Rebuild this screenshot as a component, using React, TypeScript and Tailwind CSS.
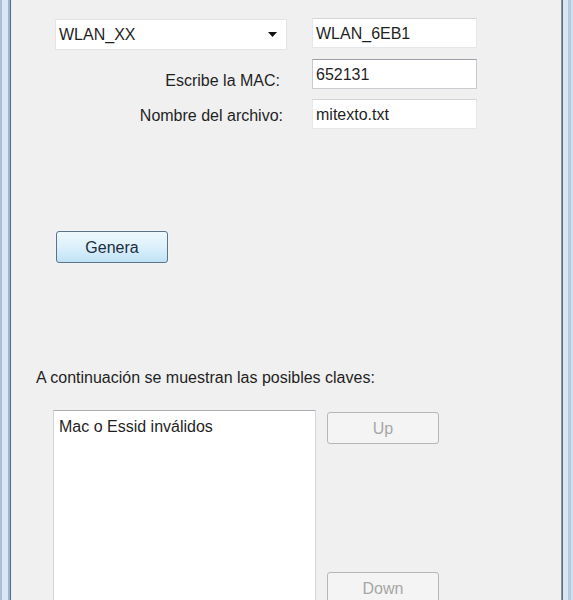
import React from 'react';

function TextBox({ value, strong }: { value: string; strong?: boolean }) {
  return (
    <div
      className={`flex h-[30px] w-[165px] items-center bg-white pl-[3px] border ${
        strong ? 'border-[#c9cbd0] border-t-[#9da1a8]' : 'border-[#e6e7ea] border-t-[#d2d4d8]'
      }`}
    >
      {value}
    </div>
  );
}

function DisabledButton({ label }: { label: string }) {
  return (
    <div className="flex h-[32px] w-[112px] shrink-0 items-center justify-center rounded-[3px] border border-[#b4b7ba] bg-[#f4f4f4] text-[#a6a6a6]">
      {label}
    </div>
  );
}

export default function App() {
  return (
    <div
      className="flex h-[600px] w-[573px] overflow-hidden bg-[#f0f0f0] text-[16px] leading-[19px] text-[#1f1f1f]"
      style={{ fontFamily: '"Liberation Sans", Arial, sans-serif' }}
    >
      {/* left window frame */}
      <div className="flex shrink-0">
        <div className="w-[2px] bg-[#aebfd2]" />
        <div className="w-[6px] bg-[#d9e6f3]" />
        <div className="w-[2px] bg-[#9cb4cd]" />
        <div className="w-[1px] bg-[#5c6e80]" />
        <div className="w-[1px] bg-[#e6e9ec]" />
      </div>

      <div className="flex flex-1 flex-col pl-[24px] pt-[18px]">
        <div className="ml-[19px] grid shrink-0 grid-cols-[232px_165px] gap-x-[25px] gap-y-[8px]">
          <div className="mt-[1px] flex h-[31px] items-center justify-between border border-[#e4e4e4] bg-white pl-[3px] pr-[9px]">
            <span>WLAN_XX</span>
            <svg width="9" height="5" viewBox="0 0 9 5">
              <polygon points="0,0 9,0 4.5,5" fill="#111" />
            </svg>
          </div>
          <TextBox value="WLAN_6EB1" />

          <div className="flex h-[30px] items-center justify-end pr-[7px] pt-[14px]">Escribe la MAC:</div>
          <div className="mt-[1px]">
            <TextBox value="652131" strong />
          </div>

          <div className="flex h-[30px] items-center justify-end pr-[4px] pt-[6px]">Nombre del archivo:</div>
          <div className="mt-[2px]">
            <TextBox value="mitexto.txt" />
          </div>
        </div>

        <div className="ml-[20px] mt-[102px] flex h-[32px] w-[112px] shrink-0 items-center justify-center rounded-[3px] border border-[#5d7384] bg-gradient-to-b from-[#eef8fd] via-[#dcf0fb] to-[#c0e3f5] text-[#1b2d40] shadow-[0_0_0_1px_#eef4f8]">
          Genera
        </div>

        <div className="mt-[105px] shrink-0">A continuación se muestran las posibles claves:</div>

        <div className="ml-[17px] mt-[23px] flex shrink-0">
          <div className="h-[200px] w-[263px] border border-[#d2d4d8] border-t-[#a9acb2] bg-white pl-[5px] pt-[6px]">
            Mac o Essid inválidos
          </div>
          <div className="ml-[11px] flex flex-col gap-[128px] pt-[2px]">
            <DisabledButton label="Up" />
            <DisabledButton label="Down" />
          </div>
        </div>
      </div>

      {/* right window frame */}
      <div className="flex shrink-0">
        <div className="w-[1px] bg-[#8c959e]" />
        <div className="w-[1px] bg-[#5f6b77]" />
        <div className="w-[5px] bg-[#d8e6f4]" />
        <div className="w-[3px] bg-[#b3c9e0]" />
        <div className="w-[2px] bg-[#cfdff0]" />
      </div>
    </div>
  );
}
